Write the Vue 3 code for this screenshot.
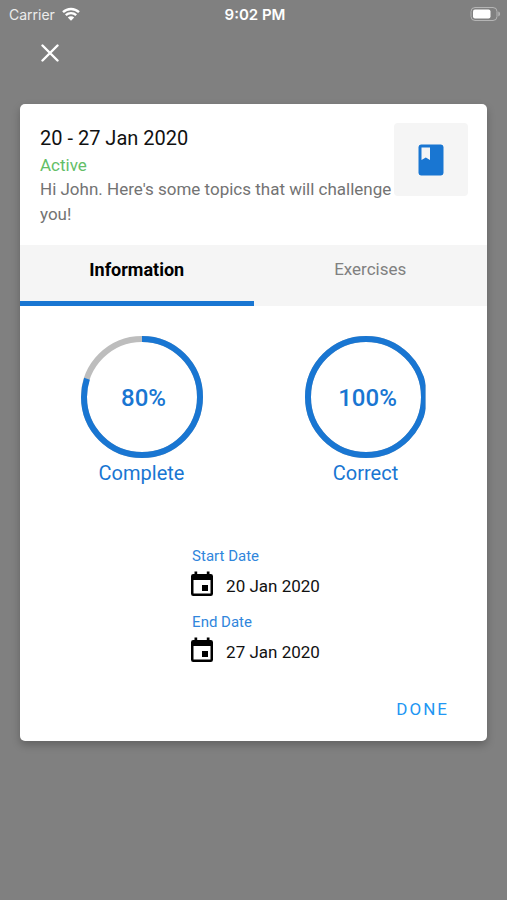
<script setup>
import { ref } from 'vue'

const tabs = ['Information', 'Exercises']
const activeTab = ref('Information')

const radius = 58
const circumference = 2 * Math.PI * radius
const stats = [
  { label: 'Complete', value: 80 },
  { label: 'Correct', value: 100 },
]
const dash = (value) => `${(circumference * value) / 100} ${circumference}`

const dates = [
  { label: 'Start Date', value: '20 Jan 2020' },
  { label: 'End Date', value: '27 Jan 2020' },
]
</script>

<template>
  <div class="screen">
    <header class="status">
      <div class="carrier">
        <span>Carrier</span>
        <svg class="wifi" viewBox="0 0 18 14" aria-hidden="true">
          <path d="M1 5.2a11.6 11.6 0 0 1 16 0" />
          <path d="M3.8 8.2a7.6 7.6 0 0 1 10.4 0" />
          <path class="solid" d="M9 13.8 5.8 10.6a4.6 4.6 0 0 1 6.4 0z" />
        </svg>
      </div>
      <span class="time">9:02 PM</span>
      <svg class="battery" viewBox="0 0 31 14" aria-hidden="true">
        <rect class="shell" x="1" y="0.5" width="26" height="13" rx="4" />
        <rect class="charge" x="3" y="2.5" width="17.5" height="9" rx="2" />
        <path class="tip" d="M28.3 4.6a2.5 2.5 0 0 1 0 4.8z" />
      </svg>
    </header>

    <div class="toolbar">
      <button class="close" type="button" aria-label="Close">
        <svg viewBox="0 0 18 18" aria-hidden="true"><path d="M1.5 1.5l15 15M16.5 1.5l-15 15" /></svg>
      </button>
    </div>

    <main class="card">
      <section class="summary">
        <div class="intro">
          <h1>20 - 27 Jan 2020</h1>
          <p class="state">Active</p>
          <p class="message">Hi John. Here's some topics that will challenge you!</p>
        </div>
        <div class="thumb">
          <svg viewBox="0 0 26 32" aria-hidden="true">
            <path
              fill-rule="evenodd"
              d="M3 .5h20A2.600 2.600 0 0 1 25.500 3v26a2.600 2.600 0 0 1-2.500 2.500H3A2.600 2.600 0 0 1 .5 29V3A2.600 2.600 0 0 1 3 .5zM3.500 3.500v12.500l4.300-2.600 4.200 2.600V3.500z"
            />
          </svg>
        </div>
      </section>

      <nav class="tabs" role="tablist">
        <button
          v-for="tab in tabs"
          :key="tab"
          type="button"
          role="tab"
          :aria-selected="tab === activeTab"
          :class="['tab', { active: tab === activeTab }]"
          @click="activeTab = tab"
        >
          {{ tab }}
        </button>
      </nav>

      <section class="stats">
        <div v-for="stat in stats" :key="stat.label" class="stat">
          <div :class="['ring', { full: stat.value === 100 }]">
            <svg viewBox="0 0 122 122" aria-hidden="true">
              <circle class="track" cx="61" cy="61" :r="radius" />
              <circle
                class="progress"
                cx="61"
                cy="61"
                :r="radius"
                :stroke-dasharray="dash(stat.value)"
                transform="rotate(-90 61 61)"
              />
            </svg>
            <span class="percent">{{ stat.value }}%</span>
          </div>
          <span class="caption">{{ stat.label }}</span>
        </div>
      </section>

      <dl class="dates">
        <div v-for="date in dates" :key="date.label" class="date">
          <dt>{{ date.label }}</dt>
          <dd>
            <svg viewBox="0 0 24 26" aria-hidden="true">
              <path
                fill-rule="evenodd"
                d="M4.500 .5h2.700V3h9.600V.5h2.700V3h1.300a2.200 2.200 0 0 1 2.200 2.200v17.600a2.200 2.200 0 0 1-2.200 2.200H3.200A2.200 2.200 0 0 1 1 22.800V5.200A2.200 2.200 0 0 1 3.200 3h1.300zM3.500 9v13.500h17V9z"
              />
              <path d="M12 14h6v6h-6z" />
            </svg>
            <span>{{ date.value }}</span>
          </dd>
        </div>
      </dl>

      <footer class="actions">
        <button class="done" type="button">DONE</button>
      </footer>
    </main>
  </div>
</template>

<style>
body {
  margin: 0;
  background: #808080;
}
</style>

<style scoped>
.screen {
  box-sizing: border-box;
  min-height: 100vh;
  background: #808080;
  font-family: Roboto, "Liberation Sans", sans-serif;
  color: #111;
}
button {
  margin: 0;
  padding: 0;
  border: 0;
  background: none;
  font: inherit;
  color: inherit;
  cursor: pointer;
}
svg {
  display: block;
}
.status {
  display: grid;
  grid-template-columns: 1fr auto 1fr;
  align-items: center;
  height: 28px;
  padding: 0 6px 0 9px;
  font-family: Inter, "Liberation Sans", sans-serif;
  font-size: 14px;
  color: #fff;
}
.carrier {
  display: flex;
  align-items: center;
  gap: 7px;
  color: #ececec;
}
.wifi {
  width: 18px;
  height: 14px;
  fill: none;
  stroke: #fff;
  stroke-width: 2.4;
}
.wifi .solid {
  fill: #fff;
  stroke: none;
}
.time {
  font-size: 15px;
  font-weight: 600;
}
.battery {
  justify-self: end;
  width: 31px;
  height: 14px;
}
.shell {
  fill: none;
  stroke: #b5b5b5;
}
.charge {
  fill: #fff;
}
.tip {
  fill: #b5b5b5;
}
.toolbar {
  display: flex;
  height: 76px;
  padding: 0 41px;
}
.close {
  align-self: flex-start;
  padding: 16px 0;
}
.close svg {
  width: 18px;
  height: 18px;
  fill: none;
  stroke: #fff;
  stroke-width: 2.4;
  stroke-linecap: round;
}
.card {
  margin: 0 20px;
  overflow: hidden;
  border-radius: 5px;
  background: #fff;
  box-shadow: 0 4px 8px rgba(0, 0, 0, 0.24);
}
.summary {
  display: flex;
  align-items: flex-start;
  padding: 19px 19px 18px 20px;
}
.intro {
  flex: 1;
  min-width: 0;
}
h1,
p,
dl,
dd {
  margin: 0;
}
h1 {
  font-size: 20px;
  font-weight: 400;
  line-height: 30px;
}
.state {
  font-size: 17px;
  line-height: 24px;
  color: #63be67;
}
.message {
  font-size: 17px;
  line-height: 25px;
  color: #737373;
}
.thumb {
  display: flex;
  align-items: center;
  justify-content: center;
  flex: none;
  width: 74px;
  height: 73px;
  border-radius: 4px;
  background: #f5f5f5;
}
.thumb svg {
  width: 26px;
  height: 32px;
  fill: #1976d2;
}
.tabs {
  display: grid;
  grid-template-columns: 1fr 1fr;
  background: #f5f5f5;
}
.tab {
  height: 61px;
  padding-bottom: 8px;
  border-bottom: 5px solid transparent;
  font-size: 17px;
  color: #808080;
}
.tab.active {
  border-color: #1976d2;
  font-size: 18px;
  font-weight: 700;
  color: #000;
}
.stats {
  display: flex;
  justify-content: center;
  gap: 102px;
  padding-top: 30px;
  color: #1976d2;
}
.stat {
  display: flex;
  flex-direction: column;
  align-items: center;
}
.ring {
  display: grid;
  place-items: center;
  width: 122px;
  height: 122px;
}
.ring > * {
  grid-area: 1 / 1;
}
.ring svg {
  width: 122px;
  height: 122px;
}
.ring.full svg {
  clip-path: inset(0 1px 0 0);
}
.ring circle {
  fill: none;
  stroke-width: 6;
}
.track {
  stroke: #bdbdbd;
}
.progress {
  stroke: #1976d2;
}
.percent {
  padding: 2px 0 0 4px;
  font-size: 24px;
  font-weight: 500;
}
.caption {
  font-size: 20px;
  line-height: 30px;
}
.dates {
  display: grid;
  justify-content: center;
  gap: 10px;
  padding: 56px 0 0 3px;
}
dt {
  padding-left: 2px;
  font-size: 15px;
  line-height: 24px;
  color: #3086dc;
}
dd {
  display: flex;
  align-items: center;
  gap: 12px;
  height: 32px;
  font-size: 17px;
}
dd svg {
  width: 24px;
  height: 26px;
}
dd span {
  padding-top: 4px;
}
.actions {
  display: flex;
  justify-content: flex-end;
  padding: 28px 38px 17px;
}
.done {
  font-size: 17px;
  line-height: 30px;
  letter-spacing: 2px;
  color: #2196f3;
}
</style>
